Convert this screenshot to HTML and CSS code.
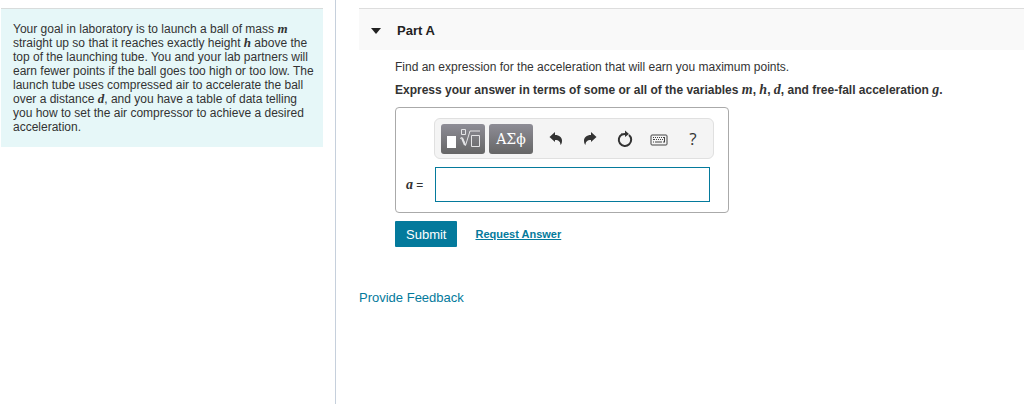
FILE: index.html
```html
<!DOCTYPE html>
<html lang="en">
<head>
    <meta charset="UTF-8">
    <meta name="viewport" content="width=device-width, initial-scale=1.0">
    <title>Part A</title>
    <link rel="stylesheet" href="styles.css">
</head>
<body>
    <div class="page">
        <aside class="sidebar">
            <p class="problem">Your goal in laboratory is to launch a ball of mass <i class="var">m</i> straight up so that it reaches exactly height <i class="var">h</i> above the top of the launching tube. You and your lab partners will earn fewer points if the ball goes too high or too low. The launch tube uses compressed air to accelerate the ball over a distance <i class="var">d</i>, and you have a table of data telling you how to set the air compressor to achieve a desired acceleration.</p>
        </aside>

        <main class="content">
            <header class="part-header">
                <svg class="arrow" width="10" height="6" viewBox="0 0 10 6"><path d="M0 0h10L5 6z"/></svg>
                <h1>Part A</h1>
            </header>

            <form class="part-body">
                <p class="question">Find an expression for the acceleration that will earn you maximum points.</p>
                <p class="instructions">Express your answer in terms of some or all of the variables <i class="var">m</i>, <i class="var">h</i>, <i class="var">d</i>, and free-fall acceleration <i class="var">g</i>.</p>

                <div class="answer-box">
                    <div class="toolbar">
                        <button type="button" class="palette" aria-label="Templates">
                            <svg width="36" height="24" viewBox="0 0 36 24" fill="none" stroke="#e4e4e6">
                                <path d="M2 9h9v12H2z" fill="#fff" stroke="none"/>
                                <path d="M16.500 2.500h4v5h-4z"/>
                                <path d="M15 11.500l2-1 3.500 8 4.500-14.500h10"/>
                                <path d="M17 11l3 7" stroke-width="2"/>
                                <path d="M26.500 8.500h8v11h-8z"/>
                            </svg>
                        </button>
                        <button type="button" class="palette">ΑΣϕ</button>
                        <div class="tools">
                            <button type="button" aria-label="Undo">
                                <svg width="16" height="16" viewBox="0 0 16 16"><path d="M1.500 6L7 1v3c4.500 0 7 2.500 7 5.500 0 2-.5 3.500-1.500 4.500 0-3-1.500-5-5.500-5V11z"/></svg>
                            </button>
                            <button type="button" aria-label="Redo">
                                <svg width="16" height="16" viewBox="0 0 16 16"><path d="M14.500 6L9 1v3C4.500 4 2 6.500 2 9.500c0 2 .5 3.500 1.500 4.500 0-3 1.500-5 5.500-5V11z"/></svg>
                            </button>
                            <button type="button" aria-label="Reset">
                                <svg width="16" height="18" viewBox="0 0 16 18"><path d="M5 4.300A6.200 6.200 0 1 0 12 5" fill="none" stroke="#333" stroke-width="2"/><path d="M4 3.500L8 3V0.500L12 4 8 7V5L5 5.500z"/></svg>
                            </button>
                            <button type="button" aria-label="Keyboard shortcuts">
                                <svg class="keyboard" width="18" height="18" viewBox="0 0 18 18">
                                    <rect x="1" y="5" width="16" height="10" rx="1"/>
                                    <path d="M3 7.500h1M5 7.500h1M7 7.500h1M9 7.500h1M11 7.500h1M13 7.500h2M3 9.500h2M6 9.500h1M8 9.500h1M10 9.500h1M12 9.500h1M14.500 8v4M3 12h1M5 12h7M13 12h2"/>
                                </svg>
                            </button>
                            <button type="button" class="help" aria-label="Help">?</button>
                        </div>
                    </div>
                    <div class="answer-row">
                        <label for="answer"><i class="var">a</i> =</label>
                        <input type="text" id="answer" autocomplete="off">
                    </div>
                </div>

                <div class="actions">
                    <button type="button" class="submit">Submit</button>
                    <a href="#" class="request">Request Answer</a>
                </div>
            </form>

            <a href="#" class="feedback">Provide Feedback</a>
        </main>
    </div>
</body>
</html>
```

FILE: styles.css
```css
* {
    box-sizing: border-box;
}
body {
    margin: 0;
    font-family: "Liberation Sans", Arial, sans-serif;
    font-size: 12px;
    line-height: 14px;
    color: #333;
    background: #fff;
}
h1, p {
    margin: 0;
}
.page {
    display: grid;
    grid-template-columns: 336px 1fr;
    min-height: 100vh;
}
.sidebar {
    padding: 8px 12px 8px 1px;
    border-right: 1px solid #c6d0dc;
}
.problem {
    padding: 13px 8px 13px 12px;
    border-top: 1px solid #d8dcdc;
    background: #e6f7f8;
}
.var {
    font-family: "Liberation Serif", "Times New Roman", serif;
    font-size: 13px;
    font-weight: bold;
    line-height: 1;
}
.content {
    padding: 8px 0 8px 23px;
}
.part-header {
    display: flex;
    align-items: center;
    gap: 16px;
    height: 42px;
    padding: 2px 12px 0;
    border-top: 1px solid #ddd;
    background: #f9f9f9;
}
.part-header h1 {
    font-size: 13px;
    color: #222;
}
.arrow {
    fill: #222;
}
.part-body {
    padding: 10px 36px 0;
}
.question {
    margin-bottom: 9px;
}
.instructions {
    margin-bottom: 10px;
    font-weight: bold;
}
.instructions .var,
.answer-row .var {
    font-size: 14px;
}
.answer-box {
    max-width: 334px;
    padding: 10px 14px 10px 10px;
    border: 1px solid #aaa;
    border-radius: 4px;
}
.toolbar {
    display: flex;
    align-items: center;
    gap: 4px;
    height: 41px;
    margin-left: 28px;
    padding: 0 3px 0 6px;
    border: 1px solid #e0e0e0;
    border-radius: 6px;
    background: #f4f4f4;
}
.toolbar button {
    display: flex;
    align-items: center;
    justify-content: center;
    height: 30px;
    padding: 0;
    border: none;
    cursor: pointer;
}
.toolbar .palette {
    width: 44px;
    border-radius: 3px;
    background: linear-gradient(#8e8d96, #666);
    color: #fff;
    font-family: "DejaVu Serif", serif;
    font-size: 14px;
}
.tools {
    display: flex;
    flex: 1;
    margin-left: 2px;
}
.tools button {
    flex: 1;
    background: none;
}
.tools svg {
    fill: #333;
}
.tools .keyboard {
    fill: none;
    stroke: #444;
}
.tools .help {
    color: #333;
    font-family: "Open Sans", sans-serif;
    font-size: 17px;
}
.answer-row {
    display: flex;
    align-items: center;
    margin-top: 8px;
}
.answer-row label {
    width: 29px;
}
.answer-row input {
    flex: 1;
    min-width: 0;
    height: 35px;
    margin-right: 4px;
    padding: 0 8px;
    border: 1px solid #047a9c;
    font-size: 14px;
    outline: none;
}
.actions {
    display: flex;
    align-items: center;
    gap: 18px;
    margin-top: 8px;
}
.submit {
    height: 26px;
    padding: 0 11px;
    border: none;
    border-radius: 1px;
    background: #047a9c;
    color: #fff;
    font-family: inherit;
    font-size: 13px;
    cursor: pointer;
}
.request {
    color: #047a9c;
    font-size: 11px;
    font-weight: bold;
}
.feedback {
    display: inline-block;
    margin-top: 44px;
    color: #047a9c;
    font-size: 13px;
    text-decoration: none;
}
```
